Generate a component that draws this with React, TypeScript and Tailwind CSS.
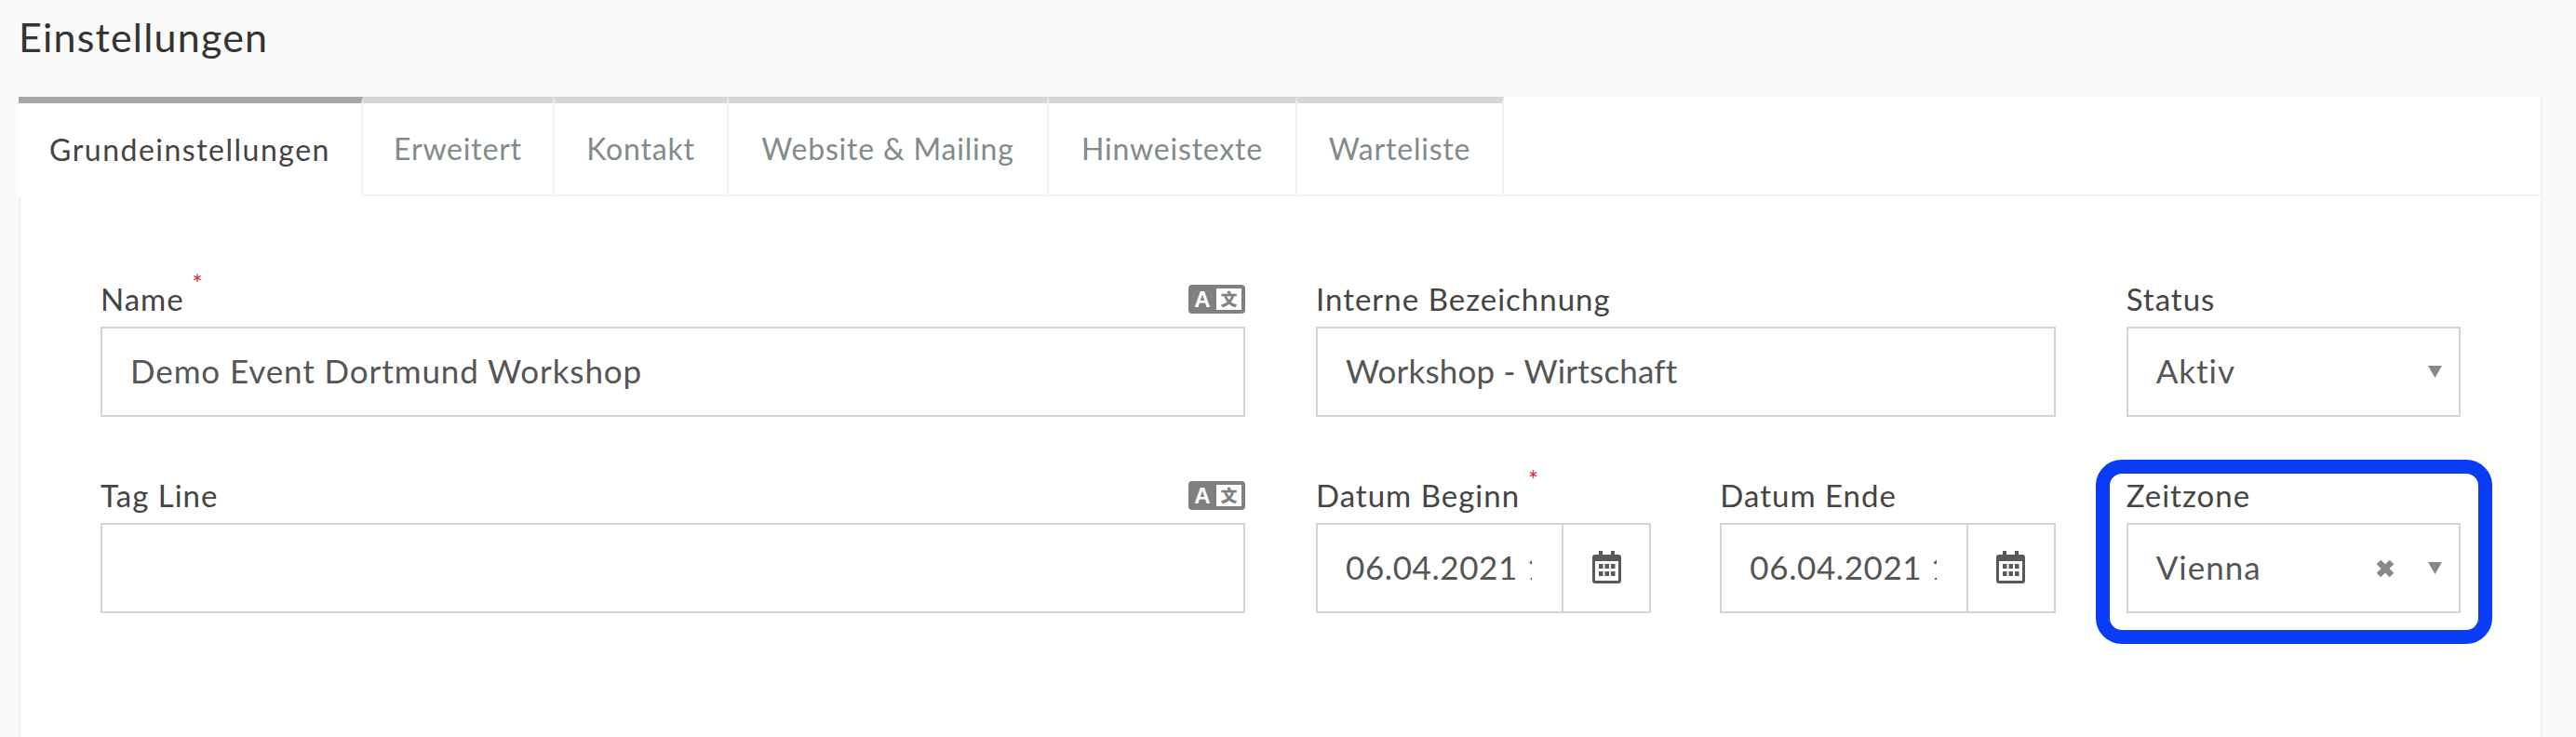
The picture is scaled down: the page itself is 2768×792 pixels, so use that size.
import { ReactNode } from 'react'

const tabs = [
  { label: 'Erweitert', width: 'w-[206px]' },
  { label: 'Kontakt', width: 'w-[187px]' },
  { label: 'Website & Mailing', width: 'w-[344px]' },
  { label: 'Hinweistexte', width: 'w-[267px]' },
  { label: 'Warteliste', width: 'w-[222px]' },
]

function TranslateIcon() {
  return (
    <svg width="61" height="31" viewBox="0 0 61 31" className="mt-[1px] shrink-0">
      <rect width="61" height="31" rx="4" fill="#808080" />
      <rect x="30" y="4" width="27" height="23" fill="#ffffff" />
      <text x="15" y="24" textAnchor="middle" fill="#ffffff" fontSize="24" fontWeight="700" fontFamily="'Liberation Sans', sans-serif">A</text>
      <text x="43.5" y="22" textAnchor="middle" fill="#808080" stroke="#808080" strokeWidth="0.7" fontSize="17" fontWeight="700" fontFamily="'Noto Sans CJK SC', sans-serif">文</text>
    </svg>
  )
}

function CalendarIcon() {
  return (
    <svg width="31" height="35" viewBox="0 0 31 35">
      <path d="M7 0h4v4h9V0h4v4h4a3 3 0 0 1 3 3v25a3 3 0 0 1-3 3H3a3 3 0 0 1-3-3V7a3 3 0 0 1 3-3h4z" fill="#595959" />
      <rect x="3" y="11" width="25" height="21" fill="#ffffff" />
      <g fill="#595959">
        <rect x="7" y="14" width="4.5" height="5" />
        <rect x="13.5" y="14" width="4.5" height="5" />
        <rect x="20" y="14" width="4.5" height="5" />
        <rect x="7" y="22" width="4.5" height="5" />
        <rect x="13.5" y="22" width="4.5" height="5" />
        <rect x="20" y="22" width="4.5" height="5" />
      </g>
    </svg>
  )
}

function Caret() {
  return (
    <svg width="15" height="13" viewBox="0 0 15 13" className="shrink-0">
      <path d="M0 0h15l-7.5 13z" fill="#888888" />
    </svg>
  )
}

function Field({ label, required, icon, children }: { label: string; required?: boolean; icon?: boolean; children: ReactNode }) {
  return (
    <div>
      <div className="flex h-[46px] items-start justify-between">
        <span className="relative text-[33px] leading-[32px] tracking-[1px] text-[#444444]">
          {label}
          {required && <span className="absolute -right-[21px] -top-[15px] text-[26px] leading-[30px] text-[#e2232e]">*</span>}
        </span>
        {icon && <TranslateIcon />}
      </div>
      {children}
    </div>
  )
}

function TextBox({ value, className }: { value?: string; className?: string }) {
  return (
    <div className={`flex h-[97px] items-center border-2 border-[#d4d4d4] px-[30px] pb-[2px] text-[35px] text-[#555555] ${className ?? ''}`}>
      {value}
    </div>
  )
}

function DateBox({ value }: { value: string }) {
  return (
    <div className="flex h-[97px] border-2 border-[#d4d4d4] text-[35px] tracking-[0.6px] text-[#555555]">
      <div className="flex min-w-0 flex-1 items-center pb-[2px] pl-[30px] pr-[32px]">
        <div className="overflow-hidden whitespace-nowrap">{value}</div>
      </div>
      <div className="flex w-[94px] shrink-0 items-center justify-center border-l-2 border-[#d4d4d4] pb-[2px]">
        <CalendarIcon />
      </div>
    </div>
  )
}

function SelectBox({ value, clearable }: { value: string; clearable?: boolean }) {
  return (
    <div className="flex h-[97px] items-center border-2 border-[#d4d4d4] pl-[30px] pr-[18px] text-[35px] tracking-[1px] text-[#555555]">
      <span className="flex-1 pb-[2px]">{value}</span>
      {clearable && (
        <svg width="22" height="22" viewBox="0 0 22 22" className="mr-[35px]">
          <path d="M4 4l14 14M18 4L4 18" stroke="#888888" strokeWidth="6.5" />
        </svg>
      )}
      <Caret />
    </div>
  )
}

export default function App() {
  return (
    <div className="flex h-[792px] flex-col overflow-hidden bg-[#fafafa] pl-[20px] pr-[36px] font-['Lato','Liberation_Sans',sans-serif]">
      {/* Header */}
      <h1 className="flex h-[104px] shrink-0 items-start pt-[15px] text-[43px] font-normal leading-[50px] tracking-[1.2px] text-[#333333]">
        Einstellungen
      </h1>

      {/* Panel */}
      <div className="flex-1 border-x-2 border-[#f1f1f1] bg-white">
        {/* Tabs */}
        <div className="flex h-[107px] border-b-2 border-[#f1f1f1]">
          <div className="-ml-[2px] flex h-[107px] w-[370px] shrink-0 items-center justify-center border-t-[7px] border-r-2 border-t-[#a6a6a6] border-r-[#f1f1f1] bg-white text-[32px] tracking-[1.5px] text-[#444444]">
            Grundeinstellungen
          </div>
          {tabs.map((tab) => (
            <div
              key={tab.label}
              className={`flex h-[105px] shrink-0 items-center justify-center border-t-[7px] border-r-2 border-t-[#d6d6d6] border-r-[#f1f1f1] text-[32px] tracking-[0.8px] text-[#828b8b] ${tab.width}`}
            >
              {tab.label}
            </div>
          ))}
        </div>

        {/* Form */}
        <div className="relative ml-[86px] mr-[86px] mt-[94px] grid grid-cols-12 gap-x-[76px] gap-y-[68px]">
          <div className="col-span-6">
            <Field label="Name" required icon>
              <TextBox value="Demo Event Dortmund Workshop" className="tracking-[0.9px]" />
            </Field>
          </div>
          <div className="col-span-4">
            <Field label="Interne Bezeichnung">
              <TextBox value="Workshop - Wirtschaft" className="tracking-[0.2px]" />
            </Field>
          </div>
          <div className="col-span-2">
            <Field label="Status">
              <SelectBox value="Aktiv" />
            </Field>
          </div>
          <div className="col-span-6">
            <Field label="Tag Line" icon>
              <TextBox />
            </Field>
          </div>
          <div className="col-span-4 grid grid-cols-2 gap-x-[74px]">
            <Field label="Datum Beginn" required>
              <DateBox value="06.04.2021 12:00" />
            </Field>
            <Field label="Datum Ende">
              <DateBox value="06.04.2021 12:00" />
            </Field>
          </div>
          <div className="relative col-span-2">
            <Field label="Zeitzone">
              <SelectBox value="Vienna" clearable />
            </Field>
            {/* Highlight */}
            <div className="absolute -left-[33px] -right-[34px] -top-[22px] -bottom-[33px] rounded-[28px] border-[15px] border-[#0a3cf5]" />
          </div>
        </div>
      </div>
    </div>
  )
}
